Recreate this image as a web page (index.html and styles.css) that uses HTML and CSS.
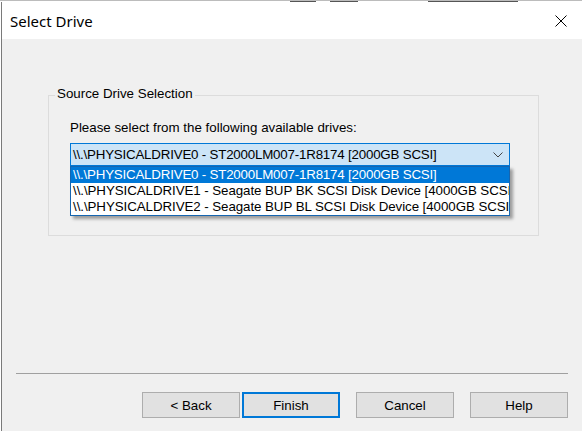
FILE: index.html
```html
<!DOCTYPE html>
<html>
<head>
<meta charset="utf-8">
<link rel="stylesheet" href="styles.css">
</head>
<body>
<div class="topstrip"><span class="frag f1"></span><span class="frag f2"></span><span class="frag f3"></span></div>
<div class="window">
  <div class="titlebar">
    <span class="title">Select Drive</span>
    <svg class="close" width="12" height="12" viewBox="0 0 12 12"><path d="M0.5 0.5 L11.5 11.5 M11.5 0.5 L0.5 11.5" stroke="#000" stroke-width="1" fill="none"/></svg>
  </div>
  <div class="content">
    <fieldset class="group">
      <legend class="legend">Source Drive Selection</legend>
      <div class="group-body">
        <p class="prompt">Please select from the following available drives:</p>
        <div class="combo-wrap">
          <div class="combo">
            <span class="combo-text">\\.\PHYSICALDRIVE0 - ST2000LM007-1R8174 [2000GB SCSI]</span>
            <svg class="chevron" width="10" height="6" viewBox="0 0 10 6"><path d="M0.5 0.5 L5 5 L9.5 0.5" stroke="#444" stroke-width="1" fill="none"/></svg>
          </div>
          <ul class="droplist">
            <li class="item selected">\\.\PHYSICALDRIVE0 - ST2000LM007-1R8174 [2000GB SCSI]</li>
            <li class="item wide">\\.\PHYSICALDRIVE1 - Seagate BUP BK SCSI Disk Device [4000GB SCSI]</li>
            <li class="item wide">\\.\PHYSICALDRIVE2 - Seagate BUP BL SCSI Disk Device [4000GB SCSI]</li>
          </ul>
        </div>
      </div>
    </fieldset>
    <div class="separator"></div>
    <div class="buttons">
      <button class="btn">&lt; Back</button>
      <button class="btn btn-default">Finish</button>
      <button class="btn btn-gap">Cancel</button>
      <button class="btn btn-gap">Help</button>
    </div>
  </div>
</div>
</body>
</html>
```
FILE: styles.css
```css
html, body {
  margin: 0;
  padding: 0;
  width: 582px;
  height: 431px;
  overflow: hidden;
  background: #ffffff;
  font-family: "Liberation Sans", Arial, sans-serif;
  font-size: 13.33px;
  color: #000;
}

.topstrip {
  height: 2px;
  background: #ffffff;
  border-top: 1px solid #bcbcbc;
  box-sizing: border-box;
  display: flex;
}

.frag {
  display: block;
  height: 1px;
  background: #555;
}
.f1 { margin-left: 290px; width: 26px; }
.f2 { margin-left: 14px; width: 28px; }
.f3 { margin-left: 70px; width: 90px; }

.window {
  margin-left: 1px;
  border-left: 1px solid #7a7a7a;
  height: 429px;
  display: flex;
  flex-direction: column;
}

.titlebar {
  height: 37px;
  flex: none;
  background: #ffffff;
  display: flex;
  align-items: center;
  justify-content: space-between;
  padding: 0 15px 0 8px;
}

.title {
  font-family: "Noto Sans", "Open Sans", sans-serif;
  font-size: 15px;
  color: #000;
}

.close {
  display: block;
}

.content {
  flex: 1;
  background: #f0f0f0;
  display: flex;
  flex-direction: column;
}

.group {
  margin: 47px 0 0 46px;
  width: 491px;
  box-sizing: border-box;
  border: 1px solid #dcdcdc;
  padding: 16px 0 69px 0;
  min-width: 0;
}

.legend {
  margin-left: 6px;
  padding: 0 2px 3px 2px;
  line-height: 15px;
}

.group-body {
  padding-left: 21px;
}

.prompt {
  margin: 0;
  line-height: 15px;
}

.combo-wrap {
  position: relative;
  margin-top: 8px;
  width: 440px;
}

.combo {
  height: 23px;
  box-sizing: border-box;
  border: 1px solid #0078d7;
  background: #cce4f7;
  display: flex;
  align-items: center;
  justify-content: space-between;
  padding: 0 6px 0 2px;
}

.combo-text {
  line-height: 15px;
  white-space: nowrap;
  letter-spacing: -0.2px;
}

.chevron {
  display: block;
  margin-top: 1px;
}

.droplist {
  position: absolute;
  left: 0;
  top: 23px;
  width: 440px;
  box-sizing: border-box;
  margin: 0;
  padding: 0;
  list-style: none;
  background: #ffffff;
  border: 1px solid #1565b0;
  box-shadow: 3px 3px 3px rgba(0, 0, 0, 0.35);
  overflow: hidden;
}

.item {
  height: 16px;
  line-height: 16px;
  padding: 0 0 0 2px;
  white-space: nowrap;
  overflow: hidden;
  letter-spacing: -0.2px;
}

.item.wide {
  letter-spacing: -0.07px;
}

.item.selected {
  background: #0078d7;
  color: #ffffff;
}

.separator {
  margin: auto 14px 0 14px;
  height: 1px;
  background: #a0a0a0;
}

.buttons {
  display: flex;
  justify-content: flex-end;
  padding-right: 14px;
  margin: 18px 0 13px 0;
}

.btn {
  width: 98px;
  height: 26px;
  box-sizing: border-box;
  background: #e1e1e1;
  border: 1px solid #adadad;
  font-family: "Liberation Sans", Arial, sans-serif;
  font-size: 13.33px;
  color: #000;
  padding: 0;
  margin: 0 0 0 2px;
}

.btn-default {
  border: 2px solid #0078d7;
}

.btn-gap {
  margin-left: 16px;
}
```
